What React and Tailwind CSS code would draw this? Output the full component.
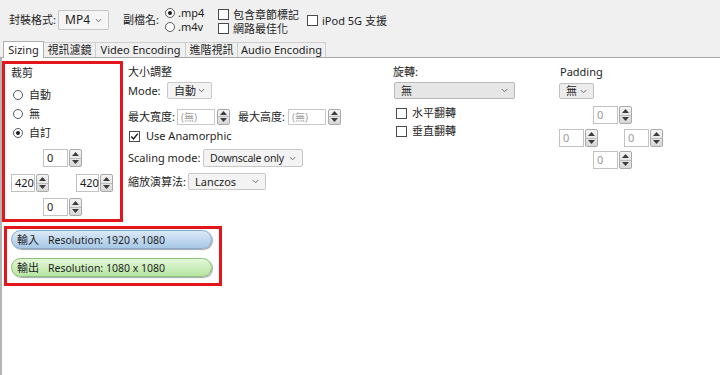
import React from "react";

function Chevron({ className = "" }) {
  return (
    <svg width="7" height="5" viewBox="0 0 7 5" className={"shrink-0 " + className}>
      <path d="M0.8 1 L3.5 3.8 L6.2 1" stroke="#707070" strokeWidth="1" fill="none" />
    </svg>
  );
}

function Select({ className, children, textCls = "pl-[6px]" }) {
  return (
    <div className={"flex items-center justify-between border rounded-[2px] " + className}>
      <span className={textCls}>{children}</span>
      <Chevron className="mr-[6px]" />
    </div>
  );
}

function SpinBtn({ className = "" }) {
  return (
    <div className={"flex flex-col border border-[#a9a9a9] rounded-[2px] bg-gradient-to-b from-[#f4f4f4] to-[#d8d8d8] " + className}>
      <div className="flex-1 flex items-center justify-center border-b border-[#bcbcbc]">
        <svg width="7" height="4" viewBox="0 0 7 4"><path d="M0 4 L3.5 0 L7 4Z" fill="#3c3c3c" /></svg>
      </div>
      <div className="flex-1 flex items-center justify-center">
        <svg width="7" height="4" viewBox="0 0 7 4"><path d="M0 0 L3.5 4 L7 0Z" fill="#3c3c3c" /></svg>
      </div>
    </div>
  );
}

function Spinner({ inputCls, spinCls = "w-[13px]", value, hCls = "h-[18px]", disabled }) {
  return (
    <div className={"flex gap-[1px] " + hCls}>
      <div className={"border border-[#c2c2c2] bg-white flex items-center pl-[3px] " + inputCls + (disabled ? " text-[#9a9a9a]" : " text-[#1a1a1a]")}>
        {value}
      </div>
      <SpinBtn className={spinCls} />
    </div>
  );
}

function Radio({ checked }) {
  return (
    <div className="w-[10px] h-[10px] rounded-full border border-[#5a5a5a] bg-white flex items-center justify-center shrink-0">
      {checked && <div className="w-[4px] h-[4px] rounded-full bg-[#1a1a1a]" />}
    </div>
  );
}

function Check({ checked }) {
  return (
    <div className="w-[11px] h-[11px] border border-[#4a4a4a] bg-white flex items-center justify-center shrink-0">
      {checked && (
        <svg width="9" height="9" viewBox="0 0 9 9">
          <path d="M1.2 4.6 L3.5 7 L7.8 1.6" stroke="#1a1a1a" strokeWidth="1.4" fill="none" />
        </svg>
      )}
    </div>
  );
}

export default function App() {
  return (
    <div className="w-[720px] h-[375px] bg-white overflow-hidden whitespace-nowrap text-[11px] leading-[14px] text-[#1e1e1e] font-['Noto_Sans','Noto_Sans_CJK_TC',sans-serif]">
      {/* top bar */}
      <div className="h-[40px] bg-[#f0f0f0] flex items-center">
        <span className="ml-[9px] w-[49px]">封裝格式:</span>
        <Select className="w-[51px] h-[20px] bg-[#f5f5f5] border-[#c6c6c6] text-[12px]" textCls="pl-[6px]">MP4</Select>
        <span className="ml-[14px] w-[42px]">副檔名:</span>
        <div className="w-[53px] flex flex-col">
          <div className="h-[14px] flex items-center gap-[3px]"><Radio checked /><span>.mp4</span></div>
          <div className="h-[14px] flex items-center gap-[3px]"><Radio /><span>.m4v</span></div>
        </div>
        <div className="w-[89px] flex flex-col mt-[3px]">
          <div className="h-[14px] flex items-center gap-[4px]"><Check /><span>包含章節標記</span></div>
          <div className="h-[14px] flex items-center gap-[4px]"><Check /><span>網路最佳化</span></div>
        </div>
        <div className="flex items-center gap-[4px] mt-[1px]"><Check /><span>iPod 5G 支援</span></div>
      </div>

      {/* tabs */}
      <div className="h-[17px] bg-[#f0f0f0] flex items-end pl-[3px]">
        <div className="w-[41px] h-[17px] bg-white border border-[#b0b0b0] border-b-0 mb-[-1px] relative z-10 flex items-center justify-center">Sizing</div>
        <div className="w-[52px] h-[15px] border border-[#cdcdcd] border-b-0 border-l-0 flex items-center justify-center">視訊濾鏡</div>
        <div className="w-[90px] h-[15px] border border-[#cdcdcd] border-b-0 border-l-0 flex items-center justify-center">Video Encoding</div>
        <div className="w-[52px] h-[15px] border border-[#cdcdcd] border-b-0 border-l-0 flex items-center justify-center">進階視訊</div>
        <div className="w-[88px] h-[15px] border border-[#cdcdcd] border-b-0 border-l-0 flex items-center justify-center">Audio Encoding</div>
      </div>

      {/* content */}
      <div className="h-[318px] border-t border-[#a8a8a8] border-l-[2px] border-l-[#b4b4b4] flex flex-col">
        <div className="flex items-start">
          {/* crop box */}
          <div className="mt-[3px] w-[121px] h-[161px] border-[3px] border-[#e3161b] flex flex-col">
            <div className="pl-[6px] pt-[2px] h-[16px]">裁剪</div>
            <div className="mt-[5px] flex flex-col">
              <div className="h-[19px] flex items-center pl-[8px] gap-[6px]"><Radio /><span>自動</span></div>
              <div className="h-[19px] flex items-center pl-[8px] gap-[6px]"><Radio /><span>無</span></div>
              <div className="h-[19px] flex items-center pl-[8px] gap-[6px]"><Radio checked /><span>自訂</span></div>
            </div>
            <div className="mt-[7px] ml-[38px]"><Spinner inputCls="w-[25px]" value="0" /></div>
            <div className="mt-[7px] flex">
              <div className="ml-[6px]"><Spinner inputCls="w-[24px]" value="420" /></div>
              <div className="ml-[27px]"><Spinner inputCls="w-[23px]" value="420" /></div>
            </div>
            <div className="mt-[6px] ml-[38px]"><Spinner inputCls="w-[25px]" value="0" /></div>
          </div>

          {/* size column */}
          <div className="ml-[5px] w-[264px] pt-[7px] flex flex-col">
            <div className="h-[14px]">大小調整</div>
            <div className="mt-[3px] h-[17px] flex items-center">
              <span className="w-[39px]">Mode:</span>
              <Select className="w-[45px] h-[17px] bg-[#f3f3f3] border-[#c8c8c8]">自動</Select>
            </div>
            <div className="mt-[9px] h-[17px] flex items-center">
              <span className="w-[49px]">最大寬度:</span>
              <div className="flex gap-[2px] h-[16px]">
                <div className="w-[38px] border border-[#c8c8c8] bg-white flex items-center pl-[3px] text-[#a0a0a0] text-[10px]">(無)</div>
                <SpinBtn className="w-[13px]" />
              </div>
              <span className="ml-[8px] w-[50px]">最大高度:</span>
              <div className="flex gap-[2px] h-[16px]">
                <div className="w-[38px] border border-[#c8c8c8] bg-white flex items-center pl-[3px] text-[#a0a0a0] text-[10px]">(無)</div>
                <SpinBtn className="w-[13px]" />
              </div>
            </div>
            <div className="mt-[2px] h-[18px] flex items-center">
              <div className="ml-[1px]"><Check checked /></div>
              <span className="ml-[6px]">Use Anamorphic</span>
            </div>
            <div className="mt-[4px] h-[18px] flex items-center">
              <span className="w-[75px]">Scaling mode:</span>
              <Select className="w-[100px] h-[18px] bg-[#f3f3f3] border-[#c8c8c8]" textCls="pl-[6px] text-[10.5px] tracking-[-0.2px]">Downscale only</Select>
            </div>
            <div className="mt-[6px] h-[17px] flex items-center">
              <span className="w-[60px]">縮放演算法:</span>
              <Select className="w-[78px] h-[17px] bg-[#f3f3f3] border-[#c8c8c8]">Lanczos</Select>
            </div>
          </div>

          {/* rotation column */}
          <div className="w-[167px] pt-[7px] flex flex-col">
            <div className="h-[14px] ml-[1px]">旋轉:</div>
            <Select className="mt-[3px] ml-[2px] w-[121px] h-[17px] bg-[#e6e6e6] border-[#b8b8b8]">無</Select>
            <div className="mt-[5px] flex flex-col">
              <div className="h-[18px] flex items-center pl-[4px] gap-[5px]"><Check /><span>水平翻轉</span></div>
              <div className="h-[18px] flex items-center pl-[4px] gap-[5px]"><Check /><span>垂直翻轉</span></div>
            </div>
          </div>

          {/* padding column */}
          <div className="pt-[7px] flex flex-col">
            <div className="h-[14px] ml-[1px]">Padding</div>
            <Select className="mt-[4px] w-[35px] h-[16px] bg-[#ececec] border-[#c0c0c0]">無</Select>
            <div className="mt-[7px] ml-[34px]"><Spinner inputCls="w-[25px]" value="0" disabled /></div>
            <div className="mt-[5px] flex">
              <Spinner inputCls="w-[25px]" value="0" disabled />
              <div className="ml-[26px]"><Spinner inputCls="w-[25px]" value="0" disabled /></div>
            </div>
            <div className="mt-[4px] ml-[34px]"><Spinner inputCls="w-[25px]" value="0" disabled /></div>
          </div>
        </div>

        {/* resolution box */}
        <div className="mt-[4px] ml-[2px] w-[218px] h-[60px] border-[3px] border-[#e3161b] flex flex-col">
          <div className="mt-[1px] ml-[4px] w-[201px] h-[19px] rounded-full border border-[#86a9cc] bg-gradient-to-b from-[#dbe9f7] to-[#a7c8e6] shadow-[1px_1px_1px_rgba(0,0,0,0.35)] flex items-center pl-[5px]">
            <span className="w-[31px]">輸入</span>
            <span className="text-[10.5px]">Resolution: 1920 x 1080</span>
          </div>
          <div className="mt-[9px] ml-[4px] w-[201px] h-[19px] rounded-full border border-[#8dc27b] bg-gradient-to-b from-[#e3f7d8] to-[#b6e5a2] shadow-[1px_1px_1px_rgba(0,0,0,0.35)] flex items-center pl-[5px]">
            <span className="w-[31px]">輸出</span>
            <span className="text-[10.5px]">Resolution: 1080 x 1080</span>
          </div>
        </div>
      </div>
    </div>
  );
}
